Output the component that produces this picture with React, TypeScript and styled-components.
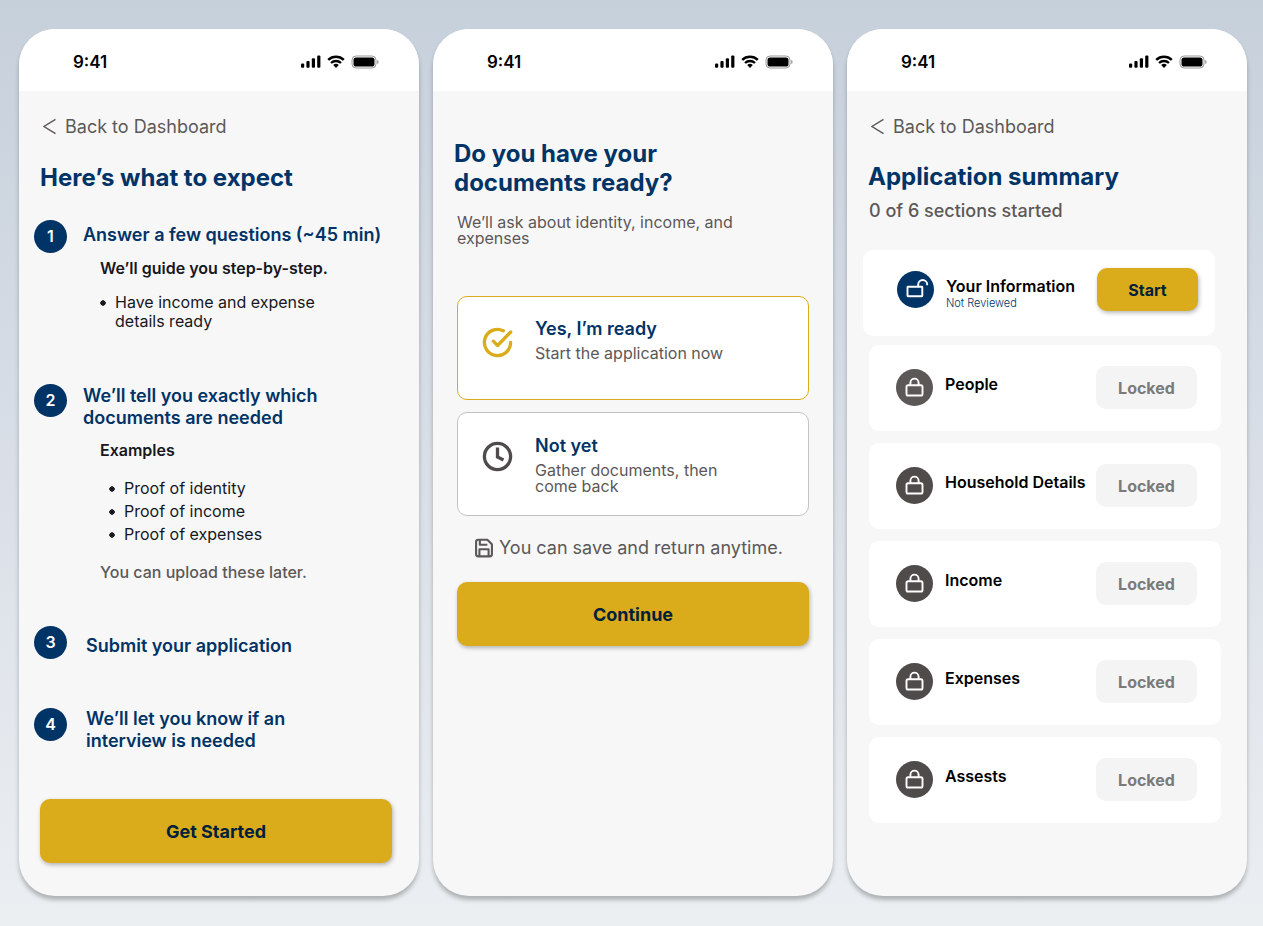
import React from "react";
import styled, { createGlobalStyle } from "styled-components";

const navy = "#003366";
const gold = "#DAAB1A";
const grey = "#4F4B4A";
const softGrey = "#5C5857";

const GlobalStyle = createGlobalStyle`
  * { box-sizing: border-box; }
  body { margin: 0; font-family: Inter, "Liberation Sans", sans-serif; }
  h1, h2, h3, p, ul, ol { margin: 0; padding: 0; }
  ul, ol { list-style: none; }
  button { border: 0; font-family: inherit; cursor: pointer; }
`;

const Page = styled.main`
  min-height: 100vh;
  display: grid;
  grid-template-columns: repeat(3, minmax(0, 1fr));
  gap: 14px;
  padding: 29px 16px 30px 19px;
  background: linear-gradient(180deg, #c6d0db 0%, #dbe0e8 55%, #ebeff2 100%);
`;

const Phone = styled.section`
  display: flex;
  flex-direction: column;
  overflow: hidden;
  border-radius: 36px;
  background: #f7f7f7;
  box-shadow: 0 4px 4px rgba(0, 0, 0, 0.25);
`;

const StatusBar = styled.header`
  display: flex;
  align-items: center;
  justify-content: space-between;
  height: 62px;
  padding: 4px 40px 0 54px;
  background: #fff;
  color: #000;
  font-size: 17px;
  font-weight: 600;
  line-height: 22px;
`;

const Body = styled.div`
  display: flex;
  flex-direction: column;
  padding: 25px 24px 33px 21px;
`;

const BackLink = styled.a`
  display: flex;
  align-items: center;
  gap: 8px;
  padding-left: 3px;
  color: #5c5958;
  font-size: 18px;
  line-height: 22px;
  text-decoration: none;
`;

const Title = styled.h1<{ $top: number }>`
  margin-top: ${(p) => p.$top}px;
  color: ${navy};
  font-size: 24px;
  font-weight: 700;
  line-height: 29px;
`;

const Steps = styled.ol`
  display: flex;
  flex-direction: column;
  margin: 28px 0 0 -6px;
`;

const Step = styled.li<{ $gap: number; $space: number }>`
  display: flex;
  align-items: flex-start;
  gap: ${(p) => p.$gap}px;
  margin-bottom: ${(p) => p.$space}px;
`;

const StepNumber = styled.span`
  flex: none;
  display: grid;
  place-items: center;
  width: 33px;
  height: 33px;
  border-radius: 50%;
  background: ${navy};
  color: #fff;
  font-size: 16px;
  font-weight: 600;
  line-height: 19px;
`;

const StepContent = styled.div<{ $top?: number }>`
  padding-top: ${(p) => p.$top ?? 0}px;
`;

const Heading = styled.h2`
  color: ${navy};
  font-size: 18px;
  font-weight: 600;
  line-height: 22px;
`;

const Detail = styled.div<{ $top: number }>`
  padding: ${(p) => p.$top}px 0 0 17px;
  color: #16181d;
  font-size: 16px;
  line-height: 19px;
`;

const Lead = styled.h3`
  font-size: 16px;
  font-weight: 600;
  line-height: 19px;
`;

const Bullets = styled.ul<{ $line: number; $indent: number; $top: number }>`
  max-width: 240px;
  margin-top: ${(p) => p.$top}px;
  line-height: ${(p) => p.$line}px;
  padding-left: ${(p) => p.$indent}px;

  li {
    display: flex;
    gap: 9px;
  }
  li::before {
    content: "";
    flex: none;
    width: 6px;
    height: 6px;
    margin-top: ${(p) => (p.$line - 5) / 2}px;
    border-radius: 50%;
    background: radial-gradient(circle, #16181d 58%, transparent 72%);
  }
`;

const Note = styled.p`
  margin-top: 17px;
  color: #5c5958;
  font-weight: 500;
`;

const PrimaryButton = styled.button`
  height: 64px;
  padding: 2px 0 0;
  border-radius: 10px;
  background: ${gold};
  box-shadow: 1px 2px 4px rgba(0, 0, 0, 0.28);
  color: #001f3d;
  font-size: 18px;
  font-weight: 700;
  line-height: 22px;
`;

const Footer = styled.footer`
  display: grid;
  padding-right: 3px;
`;

const Subtitle = styled.p`
  max-width: 330px;
  margin-top: 17px;
  padding-left: 3px;
  color: ${softGrey};
  font-size: 16px;
  line-height: 16px;
`;

const Panel = styled.div`
  display: flex;
  flex-direction: column;
  margin-top: 50px;
  padding-left: 3px;
`;

const Choice = styled.button<{ $selected?: boolean }>`
  display: flex;
  align-items: flex-start;
  gap: 21px;
  height: 104px;
  margin-bottom: 12px;
  padding: ${(p) => (p.$selected ? 21 : 22)}px 70px 0 23px;
  border: 1px solid ${(p) => (p.$selected ? gold : "#c3c3c3")};
  border-radius: 10px;
  background: #fff;
  color: ${(p) => (p.$selected ? gold : grey)};
  text-align: left;

  svg {
    flex: none;
    margin-top: ${(p) => (p.$selected ? 8 : 5)}px;
  }
`;

const ChoiceText = styled.span`
  display: flex;
  flex-direction: column;
  gap: 5px;
  color: ${softGrey};
  font-size: 16px;
  line-height: 16px;

  strong {
    color: ${navy};
    font-size: 18px;
    font-weight: 600;
    line-height: 22px;
  }
`;

const SaveNote = styled.p`
  display: flex;
  align-items: center;
  gap: 5px;
  margin: 9px 0 23px;
  padding-left: 17px;
  color: ${softGrey};
  font-size: 18px;
  line-height: 22px;
`;

const Progress = styled.p`
  margin-top: 9px;
  padding-left: 1px;
  color: #5c5958;
  font-size: 18px;
  font-weight: 500;
  line-height: 22px;
`;

const Sections = styled.ul`
  display: flex;
  flex-direction: column;
  gap: 12px;
  margin-top: 28px;
`;

const SectionRow = styled.li<{ $open?: boolean }>`
  display: flex;
  align-items: flex-start;
  height: 86px;
  margin: ${(p) => (p.$open ? "0 8px -3px -5px" : "0 2px 0 1px")};
  padding: ${(p) => (p.$open ? "18px 17px 0 34px" : "21px 24px 0 27px")};
  border-radius: 10px;
  background: #fff;
`;

const Badge = styled.span<{ $color: string }>`
  flex: none;
  display: grid;
  place-items: center;
  width: 37px;
  height: 37px;
  margin: 3px 12px 0 0;
  border-radius: 50%;
  background: ${(p) => p.$color};
  color: #fff;
`;

const SectionName = styled.div`
  flex: 1;
  padding-top: 9px;
  white-space: nowrap;

  h2 {
    color: #000;
    font-size: 16px;
    font-weight: 600;
    line-height: 19px;
  }
  p {
    color: ${navy};
    font-size: 11px;
    font-weight: 300;
    line-height: 14px;
  }
`;

const SectionButton = styled.button`
  flex: none;
  width: 101px;
  height: 43px;
  padding: 2px 0 0;
  border-radius: 10px;
  background: ${gold};
  box-shadow: 1px 2px 4px rgba(0, 0, 0, 0.28);
  color: #001f3d;
  font-size: 16px;
  font-weight: 700;
  line-height: 19px;

  &:disabled {
    background: #f4f4f4;
    box-shadow: none;
    color: #7a7a7a;
    cursor: default;
  }
`;

const StatusIcons = () => (
  <svg width="78" height="14" viewBox="0 0 78 14" fill="none" aria-hidden="true">
    <rect x="0" y="8.5" width="3.2" height="4.2" rx="1" fill="#000" />
    <rect x="5.4" y="6" width="3.2" height="6.7" rx="1" fill="#000" />
    <rect x="10.8" y="3.3" width="3.2" height="9.4" rx="1" fill="#000" />
    <rect x="16.2" y="0.6" width="3.2" height="12.1" rx="1" fill="#000" />
    <path d="M27.2 4.9a11.3 11.3 0 0 1 15.6 0" stroke="#000" strokeWidth="2.5" />
    <path d="M30 8a7.2 7.2 0 0 1 10 0" stroke="#000" strokeWidth="2.3" />
    <path d="M35 12.9l-2.8-2.9a4 4 0 0 1 5.6 0z" fill="#000" />
    <rect x="51" y="1" width="24" height="12" rx="4" stroke="#000" strokeOpacity="0.4" />
    <rect x="52.5" y="2.5" width="21" height="9" rx="2.6" fill="#000" />
    <path d="M76.2 5v4c.9-.3 1.4-1.1 1.4-2s-.5-1.7-1.4-2z" fill="#000" fillOpacity="0.4" />
  </svg>
);

const BackIcon = () => (
  <svg width="14" height="18" viewBox="0 0 14 18" fill="none" stroke="currentColor" strokeWidth="1.4" aria-hidden="true">
    <path d="M12.5 1.3L1 8.5l11.5 7.2" />
  </svg>
);

const CheckIcon = () => (
  <svg width="33" height="33" viewBox="0 0 33 33" fill="none" stroke="currentColor" strokeWidth="3.3" strokeLinecap="round" strokeLinejoin="round" aria-hidden="true">
    <path d="M29.6 16.5A13.1 13.1 0 1 1 22.3 4.7" />
    <path d="M12.3 15.2l4.3 4.3L29.7 6" />
  </svg>
);

const ClockIcon = () => (
  <svg width="33" height="33" viewBox="0 0 33 33" fill="none" stroke="currentColor" strokeWidth="3.3" aria-hidden="true">
    <circle cx="16.5" cy="16.5" r="13.1" />
    <path d="M16.5 7.5v9.500l6 3" />
  </svg>
);

const SaveIcon = () => (
  <svg width="20" height="20" viewBox="0 0 24 24" fill="none" stroke="currentColor" strokeWidth="2.5" strokeLinejoin="round" aria-hidden="true">
    <path d="M19 22H5a2.5 2.5 0 0 1-2.5-2.5v-15A2.5 2.5 0 0 1 5 2h11l5.5 5.5v12A2.5 2.5 0 0 1 19 22z" />
    <path d="M17.5 22v-8.5h-11V22M7 2v6h9" />
  </svg>
);

const LockIcon = () => (
  <svg width="21" height="21" viewBox="0 0 21 21" fill="none" stroke="currentColor" strokeWidth="1.9" strokeLinejoin="round" aria-hidden="true">
    <rect x="2.5" y="8.3" width="16" height="10.2" rx="1.6" />
    <path d="M6.400 8.300V5.700a4.100 4.100 0 0 1 8.200 0v2.600" />
  </svg>
);

const UnlockIcon = () => (
  <svg width="27" height="21" viewBox="0 0 27 21" fill="none" stroke="currentColor" strokeWidth="1.9" strokeLinejoin="round" aria-hidden="true">
    <rect x="5.500" y="7.700" width="14.800" height="9.600" rx="0.500" />
    <path d="M16.200 7.700V5.500a4.500 4.500 0 0 1 9 0v.8" />
  </svg>
);

const Status = () => (
  <StatusBar>
    <span>9:41</span>
    <StatusIcons />
  </StatusBar>
);

const Back = () => (
  <BackLink href="#dashboard">
    <BackIcon />
    Back to Dashboard
  </BackLink>
);

const lockedSections = [
  { name: "People", color: softGrey },
  { name: "Household Details", color: grey },
  { name: "Income", color: grey },
  { name: "Expenses", color: grey },
  { name: "Assests", color: grey },
];

export default function App() {
  return (
    <>
      <GlobalStyle />
      <Page>
        <Phone>
          <Status />
          <Body>
            <Back />
            <Title $top={25}>Here’s what to expect</Title>
            <Steps>
              <Step $gap={16} $space={53}>
                <StepNumber>1</StepNumber>
                <StepContent $top={4}>
                  <Heading>Answer a few questions (~45 min)</Heading>
                  <Detail $top={13}>
                    <Lead>We’ll guide you step-by-step.</Lead>
                    <Bullets $line={19} $indent={0} $top={15}>
                      <li>Have income and expense details ready</li>
                    </Bullets>
                  </Detail>
                </StepContent>
              </Step>
              <Step $gap={16} $space={44}>
                <StepNumber>2</StepNumber>
                <StepContent $top={1}>
                  <Heading>We’ll tell you exactly which documents are needed</Heading>
                  <Detail $top={12}>
                    <Lead>Examples</Lead>
                    <Bullets $line={23} $indent={9} $top={17}>
                      <li>Proof of identity</li>
                      <li>Proof of income</li>
                      <li>Proof of expenses</li>
                    </Bullets>
                    <Note>You can upload these later.</Note>
                  </Detail>
                </StepContent>
              </Step>
              <Step $gap={19} $space={49}>
                <StepNumber>3</StepNumber>
                <StepContent $top={9}>
                  <Heading>Submit your application</Heading>
                </StepContent>
              </Step>
              <Step $gap={19} $space={47}>
                <StepNumber>4</StepNumber>
                <StepContent>
                  <Heading>
                    We’ll let you know if an
                    <br />
                    interview is needed
                  </Heading>
                </StepContent>
              </Step>
            </Steps>
            <Footer>
              <PrimaryButton type="button">Get Started</PrimaryButton>
            </Footer>
          </Body>
        </Phone>

        <Phone>
          <Status />
          <Body>
            <Title $top={23}>
              Do you have your
              <br />
              documents ready?
            </Title>
            <Subtitle>We’ll ask about identity, income, and expenses</Subtitle>
            <Panel>
              <Choice type="button" $selected>
                <CheckIcon />
                <ChoiceText>
                  <strong>Yes, I’m ready</strong>
                  <span>Start the application now</span>
                </ChoiceText>
              </Choice>
              <Choice type="button">
                <ClockIcon />
                <ChoiceText>
                  <strong>Not yet</strong>
                  <span>Gather documents, then come back</span>
                </ChoiceText>
              </Choice>
              <SaveNote>
                <SaveIcon />
                You can save and return anytime.
              </SaveNote>
              <PrimaryButton type="button">Continue</PrimaryButton>
            </Panel>
          </Body>
        </Phone>

        <Phone>
          <Status />
          <Body>
            <Back />
            <Title $top={24}>Application summary</Title>
            <Progress>0 of 6 sections started</Progress>
            <Sections>
              <SectionRow $open>
                <Badge $color={navy}>
                  <UnlockIcon />
                </Badge>
                <SectionName>
                  <h2>Your Information</h2>
                  <p>Not Reviewed</p>
                </SectionName>
                <SectionButton type="button">Start</SectionButton>
              </SectionRow>
              {lockedSections.map(({ name, color }) => (
                <SectionRow key={name}>
                  <Badge $color={color}>
                    <LockIcon />
                  </Badge>
                  <SectionName>
                    <h2>{name}</h2>
                  </SectionName>
                  <SectionButton type="button" disabled>
                    Locked
                  </SectionButton>
                </SectionRow>
              ))}
            </Sections>
          </Body>
        </Phone>
      </Page>
    </>
  );
}
